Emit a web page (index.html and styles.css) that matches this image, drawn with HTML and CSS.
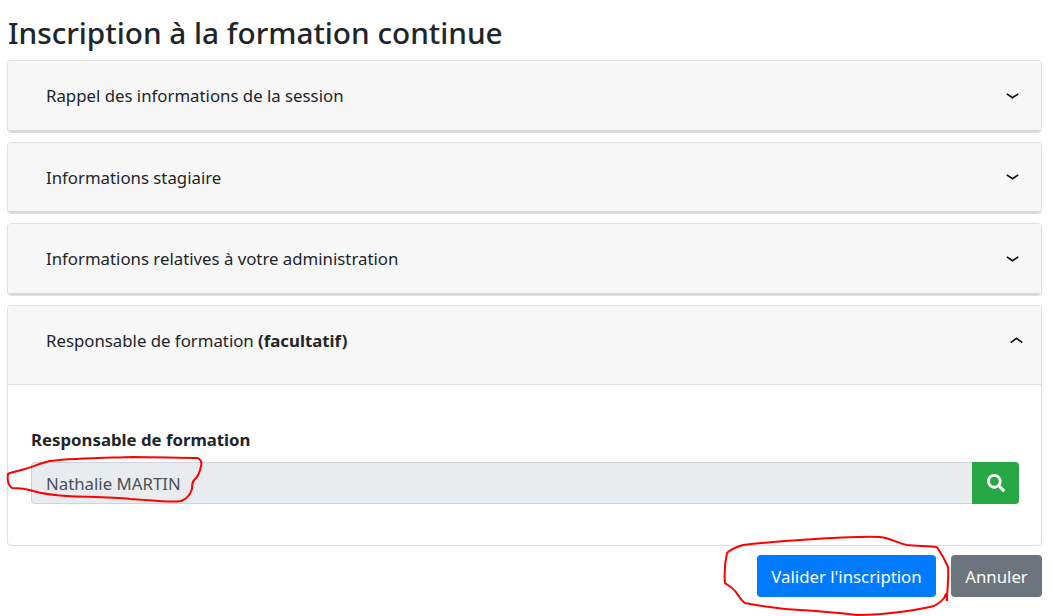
FILE: index.html
```html
<!DOCTYPE html>
<html lang="fr">
<head>
<meta charset="utf-8">
<title>Inscription à la formation continue</title>
<link rel="stylesheet" href="styles.css">
</head>
<body>
<main class="page">
  <h1 class="title">Inscription à la formation continue</h1>
  <section class="card">
    <div class="card-header closed">
      <span>Rappel des informations de la session</span>
      <svg class="chev" viewBox="0 0 12 6"><path d="M0.7 0.8 L6 4.4 L11.3 0.8"/></svg>
    </div>
  </section>
  <section class="card">
    <div class="card-header closed">
      <span>Informations stagiaire</span>
      <svg class="chev" viewBox="0 0 12 6"><path d="M0.7 0.8 L6 4.4 L11.3 0.8"/></svg>
    </div>
  </section>
  <section class="card">
    <div class="card-header closed">
      <span>Informations relatives à votre administration</span>
      <svg class="chev" viewBox="0 0 12 6"><path d="M0.7 0.8 L6 4.4 L11.3 0.8"/></svg>
    </div>
  </section>
  <section class="card open">
    <div class="card-header opened">
      <span>Responsable de formation <b>(facultatif)</b></span>
      <svg class="chev up" viewBox="0 0 12 6"><path d="M0.7 5.2 L6 1.2 L11.3 5.2"/></svg>
    </div>
    <div class="card-body">
      <label class="label" for="resp">Responsable de formation</label>
      <div class="input-group">
        <input class="input" id="resp" value="Nathalie MARTIN" readonly>
        <button class="search" type="button" aria-label="Rechercher">
          <svg viewBox="0 0 512 512"><path d="M505 442.700L405.300 343c-4.500-4.500-10.600-7-17-7H372c27.600-35.300 44-79.700 44-128C416 93.100 322.900 0 208 0S0 93.100 0 208s93.100 208 208 208c48.300 0 92.700-16.400 128-44v16.300c0 6.400 2.500 12.500 7 17l99.700 99.700c9.400 9.400 24.600 9.400 33.900 0l28.300-28.300c9.400-9.400 9.400-24.600.1-34zM208 336c-70.700 0-128-57.200-128-128 0-70.700 57.200-128 128-128 70.700 0 128 57.200 128 128 0 70.700-57.200 128-128 128z"/></svg>
        </button>
      </div>
    </div>
  </section>
  <div class="actions">
    <button class="btn primary" type="button">Valider l'inscription</button>
    <button class="btn secondary" type="button">Annuler</button>
  </div>
</main>
<svg class="marks" viewBox="0 0 1053 616">
  <path d="M198 458 C201 460 202 463 201 466 C200 471 199 475 196 478 C192 481 192 485 192 489 C190 495 187 499 181 501 C170 503 150 500 130 499 C110 497 85 497 67 496 C50 495 40 493 33 491 C27 489 22 488 12 488 C8 485 7 480 8 474 C12 472 18 471 25 469 C33 467 40 463 50 461 C75 458 100 458 133 457 C155 457 180 458 198 458"/>
  <path d="M937 547 C941 553 945 560 948 567 C949 578 947 590 947 601 C946 590 946 595 944 598 C940 603 935 606 930 607 C920 609 910 611 900 612 C885 614 870 615 857 615 C840 613 820 611 800 610 C780 609 760 606 745 603 C740 600 738 594 735 591 C731 586 727 585 725 583 C724 572 725 562 727 553 C731 549 736 547 743 545 C760 543 780 541 800 540 C830 538 860 536 880 537 C890 538 897 543 907 545 C917 546 927 546 937 547"/>
</svg>
</body>
</html>
```
FILE: styles.css
```css
* { box-sizing: border-box; }
html, body { margin: 0; padding: 0; }
body {
  background: #fff;
  color: #212529;
  font-family: "Noto Sans", "Open Sans", sans-serif;
  font-size: 16.8px;
  overflow: hidden;
  height: 616px;
}
.page { padding: 13px 11px 0 7px; }
.title {
  margin: 0 0 7px 1px;
  font-size: 29.75px;
  line-height: 40px;
  font-weight: 500;
}
.card {
  background: #fff;
  border: 1px solid #dfdfdf;
  border-radius: 4px;
  margin-bottom: 10px;
  overflow: hidden;
}
.card:has(.closed) { margin-bottom: 9px; }
.card-header {
  background: #f7f7f7;
  display: flex;
  justify-content: space-between;
  align-items: center;
  padding: 0 22px 0 38px;
}
.closed { height: 70.6px; border-bottom: 2px solid #d8d8d8; padding-top: 1px; }
.opened { height: 79px; border-bottom: 1px solid #dfdfdf; padding: 0 18px 9px 38px; }
.chev { width: 13px; height: 6.5px; fill: none; stroke: #111; stroke-width: 1.6; }
.card-body { padding: 44px 22px 41px 23px; }
.label { display: block; font-weight: 700; line-height: 22px; margin-bottom: 11px; }
.input-group { display: flex; height: 42px; }
.input {
  flex: 1;
  min-width: 0;
  border: 1px solid #ced4da;
  border-right: 0;
  border-radius: 4px 0 0 4px;
  background: #e9ecef;
  color: #495057;
  font: inherit;
  padding: 2px 14px 0;
}
.search {
  width: 47px;
  border: 0;
  padding: 0;
  background: #28a745;
  border-radius: 0 4px 4px 0;
  display: flex;
  align-items: center;
  justify-content: center;
}
.search svg { width: 18px; height: 18px; fill: #fff; }
.actions { display: flex; justify-content: flex-end; gap: 15px; margin-top: -1px; }
.btn {
  height: 42px;
  border: 0;
  border-radius: 4px;
  color: #fff;
  font: inherit;
  padding: 2px 0 0;
}
.primary { background: #007bff; width: 179px; }
.secondary { background: #6c757d; width: 91px; }
.marks {
  position: absolute;
  left: 0;
  top: 0;
  width: 1053px;
  height: 616px;
  fill: none;
  stroke: #f00;
  stroke-width: 2;
  pointer-events: none;
}
```
